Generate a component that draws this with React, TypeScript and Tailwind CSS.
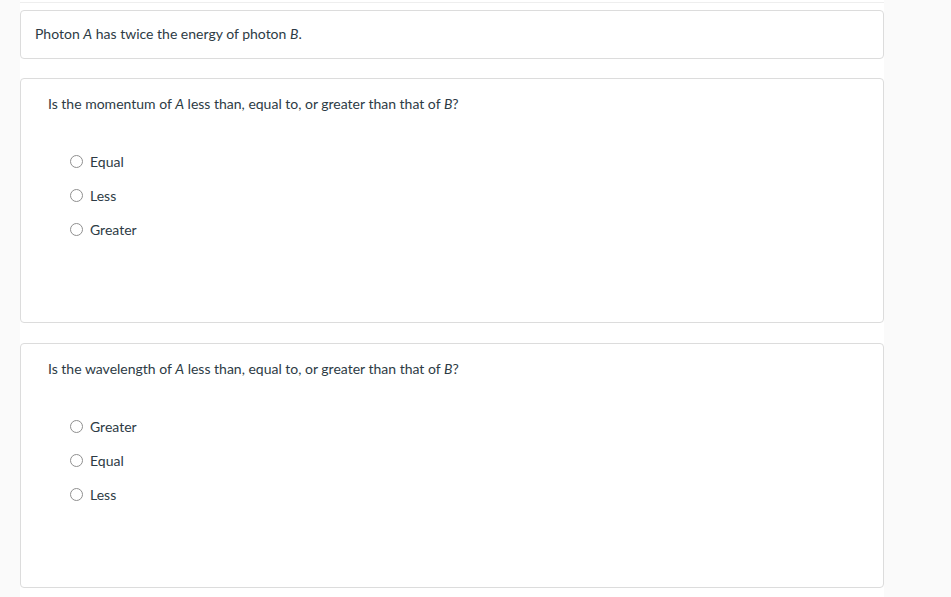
export default function App() {
  const q1 = ["Equal", "Less", "Greater"];
  const q2 = ["Greater", "Equal", "Less"];

  const Option = ({ label }: { label: string }) => (
    <div className="flex h-[34px] items-center">
      <span className="ml-[22px] mr-[7px] h-[13px] w-[13px] rounded-full border border-[#8f8f8f] bg-white" />
      <span>{label}</span>
    </div>
  );

  const Question = ({ text, options }: { text: React.ReactNode; options: string[] }) => (
    <section className="h-[245px] rounded-[4px] border border-[#dcdcdc] bg-white pl-[27px] pt-[16px]">
      <p className="leading-[18px]">{text}</p>
      <div className="mt-[31px]">
        {options.map((o) => (
          <Option key={o} label={o} />
        ))}
      </div>
    </section>
  );

  return (
    <main
      className="min-h-screen bg-[#fafafa] text-[14px] text-[#2d3b45]"
      style={{ fontFamily: "Lato, 'Liberation Sans', sans-serif" }}
    >
      <div className="ml-[20px] w-[864px] bg-white pt-[2px]">
        <div className="border-t border-[#eeeeee] pt-[7px]">
          <div className="rounded-[4px] border border-[#dcdcdc] bg-white px-[14px] pt-[14px] pb-[15px] leading-[18px]">
            Photon <i>A</i> has twice the energy of photon <i>B</i>.
          </div>
          <div className="mt-[19px] flex flex-col gap-[20px] pb-[10px]">
            <Question
              text={
                <>
                  Is the momentum of <i>A</i> less than, equal to, or greater than that of <i>B</i>?
                </>
              }
              options={q1}
            />
            <Question
              text={
                <>
                  Is the wavelength of <i>A</i> less than, equal to, or greater than that of <i>B</i>?
                </>
              }
              options={q2}
            />
          </div>
        </div>
      </div>
    </main>
  );
}
